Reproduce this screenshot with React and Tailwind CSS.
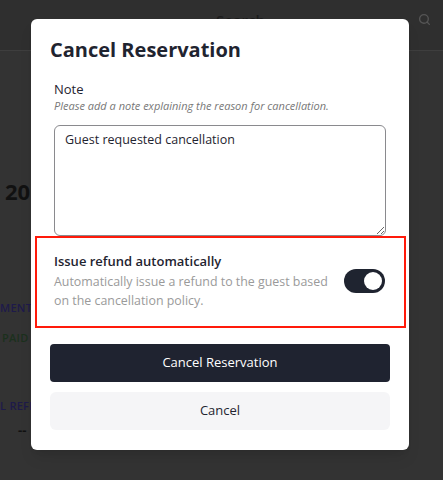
import React from 'react'
import { Search } from 'lucide-react'

const font = { fontFamily: '"Open Sans", "Noto Sans", sans-serif' }

const App = () => {
  return (
    <div className="relative h-[480px] w-[443px] overflow-hidden bg-[#333333]" style={font}>
      {/* dimmed page behind */}
      <div className="flex h-[51px] items-start justify-end border-b border-[#3e3e3e] bg-[#2f2f2f] pr-[12px] pt-[10px]">
        <div className="flex w-[215px] items-start justify-between">
          <span className="text-[15px] font-semibold leading-[20px] text-[#1c1c1c]">Search</span>
          <Search className="mt-[3px] h-[13px] w-[13px] text-[#555]" strokeWidth={2.5} />
        </div>
      </div>
      <div className="pl-[5px] pt-[124px] text-[22px] font-bold text-[#111]">20</div>
      <div className="mt-[92px] text-[11px] font-semibold tracking-wide text-[#1e1a4a]">MENT</div>
      <div className="mt-[13px] pl-[2px] text-[11px] font-semibold tracking-wide text-[#1b301d]">PAID</div>
      <div className="mt-[52px] text-[11px] font-semibold tracking-wide text-[#1e1a4a]">L REFE</div>
      <div className="mt-[6px] pl-[18px] text-[13px] font-bold text-[#111]">--</div>

      {/* modal */}
      <div className="absolute left-[31px] top-[19px] w-[378px] rounded-md bg-white px-[19px] pb-[20px] pt-[17px] shadow-lg">
        <h2 className="text-[20px] font-bold leading-[28px] text-[#1f2430]">Cancel Reservation</h2>

        <div className="mt-[16px] px-[4px]">
          <div className="text-[13px] font-medium leading-[18px] text-[#1f2430]">Note</div>
          <div className="mt-[1px] text-[11px] italic leading-[14px] text-[#777]">
            Please add a note explaining the reason for cancellation.
          </div>
          <textarea
            className="mt-[12px] block h-[111px] w-full resize-y rounded-[6px] border border-[#8a8a8e] px-[10px] py-[5px] text-[12.5px] text-[#1f2430] outline-none"
            defaultValue="Guest requested cancellation"
          />
        </div>

        <div className="-ml-[15px] -mr-[16px] flex items-center justify-between border-2 border-[#ff1a0a] pb-[16px] pl-[17px] pr-[19px] pt-[14px]">
          <div className="w-[276px]">
            <div className="text-[13px] font-semibold leading-[18px] text-[#1f2430]">Issue refund automatically</div>
            <div className="mt-[2px] text-[12.4px] leading-[19px] text-[#9a9a9a]">
              Automatically issue a refund to the guest based on the cancellation policy.
            </div>
          </div>
          <div className="flex h-[24px] w-[41px] items-center justify-end rounded-full bg-[#1f2430] px-[3px]">
            <div className="h-[18px] w-[18px] rounded-full bg-white" />
          </div>
        </div>

        <div className="mt-[16px] flex flex-col gap-[10px]">
          <button className="h-[38px] w-full rounded-[4px] bg-[#1f2330] text-[13px] text-white">
            Cancel Reservation
          </button>
          <button className="h-[38px] w-full rounded-[6px] bg-[#f5f5f7] text-[13px] text-[#1f2430]">
            Cancel
          </button>
        </div>
      </div>
    </div>
  )
}

export default App
